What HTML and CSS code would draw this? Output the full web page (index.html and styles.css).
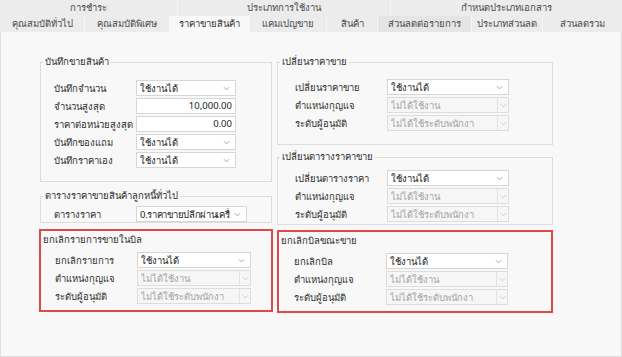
FILE: index.html
```html
<!DOCTYPE html>
<html lang="th">
<head>
<meta charset="UTF-8">
<title>ราคาขายสินค้า</title>
<link rel="stylesheet" href="styles.css">
</head>
<body>
  <div class="tabs">
    <div class="tab-row">
      <div class="tab t-pay">การชำระ</div>
      <div class="tab t-use">ประเภทการใช้งาน</div>
      <div class="tab t-fill">กำหนดประเภทเอกสาร</div>
    </div>
    <div class="tab-row">
      <div class="tab t-gen">คุณสมบัติทั่วไป</div>
      <div class="tab t-spec">คุณสมบัติพิเศษ</div>
      <div class="tab t-price active">ราคาขายสินค้า</div>
      <div class="tab t-camp">แคมเปญขาย</div>
      <div class="tab t-prod">สินค้า</div>
      <div class="tab t-disc hover">ส่วนลดต่อรายการ</div>
      <div class="tab t-dtype">ประเภทส่วนลด</div>
      <div class="tab t-fill">ส่วนลดรวม</div>
    </div>
  </div>

  <div class="panel">
    <!-- left column -->
    <div class="col col-left">
      <fieldset class="group g-sale">
        <legend>บันทึกขายสินค้า</legend>
        <div class="rows">
          <div class="row"><span class="lbl">บันทึกจำนวน</span>
            <div class="combo w100"><span>ใช้งานได้</span><svg viewBox="0 0 8 5"><polyline points="1,1 4,4 7,1"/></svg></div></div>
          <div class="row"><span class="lbl">จำนวนสูงสุด</span>
            <div class="num w100">10,000.00</div></div>
          <div class="row"><span class="lbl">ราคาต่อหน่วยสูงสุด</span>
            <div class="num w100">0.00</div></div>
          <div class="row"><span class="lbl">บันทึกของแถม</span>
            <div class="combo w100"><span>ใช้งานได้</span><svg viewBox="0 0 8 5"><polyline points="1,1 4,4 7,1"/></svg></div></div>
          <div class="row"><span class="lbl">บันทึกราคาเอง</span>
            <div class="combo w100"><span>ใช้งานได้</span><svg viewBox="0 0 8 5"><polyline points="1,1 4,4 7,1"/></svg></div></div>
        </div>
      </fieldset>

      <fieldset class="group g-table">
        <legend>ตารางราคาขายสินค้าลูกหนี้ทั่วไป</legend>
        <div class="rows">
          <div class="row"><span class="lbl">ตารางราคา</span>
            <div class="combo w111"><span class="tight">0.ราคาขายปลีกผ่านเครื่อง</span><svg viewBox="0 0 8 5"><polyline points="1,1 4,4 7,1"/></svg></div></div>
        </div>
      </fieldset>

      <div class="mark">
        <fieldset class="group g-inner">
          <legend>ยกเลิกรายการขายในบิล</legend>
          <div class="rows">
            <div class="row"><span class="lbl">ยกเลิกรายการ</span>
              <div class="combo w114"><span>ใช้งานได้</span><svg viewBox="0 0 8 5"><polyline points="1,1 4,4 7,1"/></svg></div></div>
            <div class="row"><span class="lbl">ตำแหน่งกุญแจ</span>
              <div class="combo off w114"><span>ไม่ได้ใช้งาน</span><i><svg viewBox="0 0 8 5"><polyline points="1,1 4,4 7,1"/></svg></i></div></div>
            <div class="row"><span class="lbl">ระดับผู้อนุมัติ</span>
              <div class="combo off w114"><span>ไม่ได้ใช้ระดับพนักงา</span><i><svg viewBox="0 0 8 5"><polyline points="1,1 4,4 7,1"/></svg></i></div></div>
          </div>
        </fieldset>
      </div>
    </div>

    <!-- right column -->
    <div class="col col-right">
      <fieldset class="group g-change">
        <legend>เปลี่ยนราคาขาย</legend>
        <div class="rows">
          <div class="row"><span class="lbl">เปลี่ยนราคาขาย</span>
            <div class="combo w122"><span>ใช้งานได้</span><svg viewBox="0 0 8 5"><polyline points="1,1 4,4 7,1"/></svg></div></div>
          <div class="row"><span class="lbl">ตำแหน่งกุญแจ</span>
            <div class="combo off w122"><span>ไม่ได้ใช้งาน</span><i><svg viewBox="0 0 8 5"><polyline points="1,1 4,4 7,1"/></svg></i></div></div>
          <div class="row"><span class="lbl">ระดับผู้อนุมัติ</span>
            <div class="combo off w122"><span>ไม่ได้ใช้ระดับพนักงา</span><i><svg viewBox="0 0 8 5"><polyline points="1,1 4,4 7,1"/></svg></i></div></div>
        </div>
      </fieldset>

      <fieldset class="group g-ctable">
        <legend>เปลี่ยนตารางราคาขาย</legend>
        <div class="rows">
          <div class="row"><span class="lbl">เปลี่ยนตารางราคา</span>
            <div class="combo w122"><span>ใช้งานได้</span><svg viewBox="0 0 8 5"><polyline points="1,1 4,4 7,1"/></svg></div></div>
          <div class="row"><span class="lbl">ตำแหน่งกุญแจ</span>
            <div class="combo off w122"><span>ไม่ได้ใช้งาน</span><i><svg viewBox="0 0 8 5"><polyline points="1,1 4,4 7,1"/></svg></i></div></div>
          <div class="row"><span class="lbl">ระดับผู้อนุมัติ</span>
            <div class="combo off w122"><span>ไม่ได้ใช้ระดับพนักงา</span><i><svg viewBox="0 0 8 5"><polyline points="1,1 4,4 7,1"/></svg></i></div></div>
        </div>
      </fieldset>

      <div class="mark">
        <fieldset class="group g-inner">
          <legend>ยกเลิกบิลขณะขาย</legend>
          <div class="rows">
            <div class="row"><span class="lbl">ยกเลิกบิล</span>
              <div class="combo w122"><span>ใช้งานได้</span><svg viewBox="0 0 8 5"><polyline points="1,1 4,4 7,1"/></svg></div></div>
            <div class="row"><span class="lbl">ตำแหน่งกุญแจ</span>
              <div class="combo off w122"><span>ไม่ได้ใช้งาน</span><i><svg viewBox="0 0 8 5"><polyline points="1,1 4,4 7,1"/></svg></i></div></div>
            <div class="row"><span class="lbl">ระดับผู้อนุมัติ</span>
              <div class="combo off w122"><span>ไม่ได้ใช้ระดับพนักงา</span><i><svg viewBox="0 0 8 5"><polyline points="1,1 4,4 7,1"/></svg></i></div></div>
          </div>
        </fieldset>
      </div>
    </div>
  </div>
</body>
</html>
```

FILE: styles.css
```css
body {
  margin: 0;
  width: 622px;
  height: 357px;
  background: #f8f8f8;
  font-family: "Noto Sans", "DejaVu Sans", sans-serif;
  font-size: 9.5px;
  color: #2e2e2e;
  overflow: hidden;
}

/* tab strip, two rows */
.tabs {
  background: #ececec;
}
.tab-row {
  display: flex;
  height: 16px;
}
.tab {
  box-sizing: border-box;
  line-height: 16px;
  text-align: center;
  white-space: nowrap;
  color: #4a4a4a;
  border-right: 1px solid #f6f6f6;
}
.tab.active {
  background: #f8f8f8;
  color: #333;
}
.tab.hover {
  background: #e5e5e5;
}
.t-pay { width: 178px; }
.t-use { width: 213px; }
.t-gen { width: 85px; }
.t-spec { width: 85px; }
.t-price { width: 80px; }
.t-camp { width: 77px; }
.t-prod { width: 51px; }
.t-disc { width: 94px; }
.t-dtype { width: 71px; }
.t-fill { flex: 1; border-right: none; }

/* page body */
.panel {
  box-sizing: border-box;
  height: 325px;
  border: 1px solid #dddddd;
  border-top: none;
  padding: 23px 0 0 38px;
  display: flex;
  gap: 4px;
}
.col {
  display: flex;
  flex-direction: column;
}
.col-left { width: 234px; }
.col-right { width: 276px; }

.group {
  margin: 0;
  padding: 0;
  min-width: 0;
  border: 1px solid #dcdcdc;
}
.group legend {
  margin-left: 2px;
  padding: 0 2px;
  line-height: 14px;
  color: #2e2e2e;
}
.rows {
  display: flex;
  flex-direction: column;
  gap: 2px;
}
.row {
  display: flex;
  align-items: center;
  height: 16px;
}
.lbl {
  flex: none;
  white-space: nowrap;
}

.col-left .group { margin: 0 1px; }
.col-left .lbl { width: 82px; }
.col-right .lbl { width: 92px; }

.g-sale .rows { padding: 11px 0 13px 13px; }
.g-table { margin-top: 7px !important; }
.g-table .rows { padding: 3px 0 0 13px; }
.g-change .rows { padding: 10px 0 13px 17px; }
.g-ctable { margin-top: 5px !important; }
.g-ctable .rows { padding: 6px 0 2px 17px; }

/* red highlight round a group */
.mark {
  border: 2px solid #dd4a4a;
  margin-top: 6px;
}
.col-right .mark { margin-top: 5px; }
.mark .g-inner {
  margin: 2px 0 0;
  border-color: transparent;
}
.mark .g-inner legend { margin-left: 0; padding: 0 1px; }
.col-left .mark .rows { padding: 5px 0 5px 13px; }
.col-right .mark .rows { padding: 5px 0 5px 14px; }

/* inputs */
.combo, .num {
  box-sizing: border-box;
  height: 16px;
  background: #fff;
  border: 1px solid #d6d6d6;
  color: #222;
  white-space: nowrap;
  overflow: hidden;
}
.combo {
  display: flex;
  align-items: center;
  padding-left: 3px;
}
.combo span {
  flex: 1;
  overflow: hidden;
}
.combo span.tight {
  letter-spacing: -0.3px;
}
.combo svg {
  flex: none;
  width: 7px;
  height: 5px;
  margin: 0 5px 0 3px;
  fill: none;
  stroke: #9a9a9a;
  stroke-width: 1;
}
.combo.off {
  background: #f6f6f6;
  border-color: #dddddd;
  color: #a3a3a3;
}
.combo.off i {
  flex: none;
  align-self: stretch;
  width: 10px;
  border-left: 1px solid #e2e2e2;
  display: flex;
  align-items: center;
  justify-content: center;
}
.combo.off i svg {
  margin: 0;
  stroke: #c8c8c8;
}
.num {
  text-align: right;
  padding-right: 3px;
  line-height: 14px;
}

.w100 { width: 100px; }
.w111 { width: 111px; }
.w114 { width: 114px; }
.w122 { width: 122px; }
```
